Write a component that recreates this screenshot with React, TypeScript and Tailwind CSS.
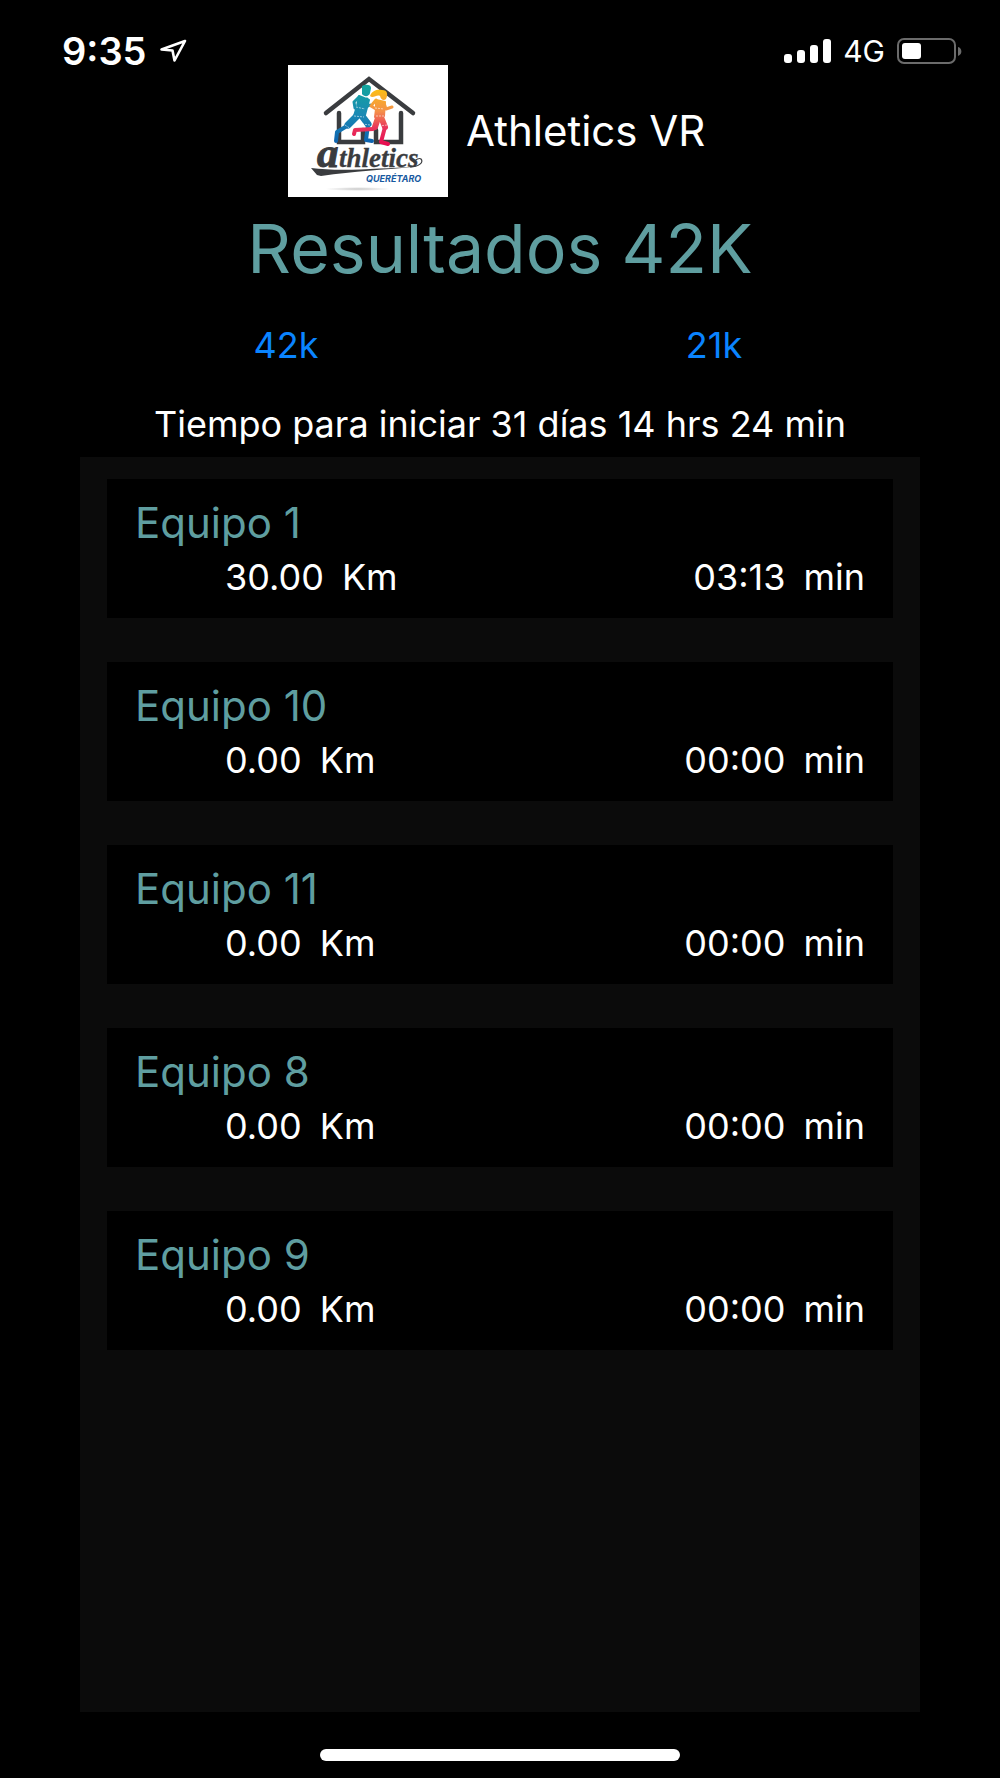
import { clsx } from 'clsx'

const RACES = ['42k', '21k']

const TEAMS = [
  { name: 'Equipo 1', distance: '30.00', time: '03:13' },
  { name: 'Equipo 10', distance: '0.00', time: '00:00' },
  { name: 'Equipo 11', distance: '0.00', time: '00:00' },
  { name: 'Equipo 8', distance: '0.00', time: '00:00' },
  { name: 'Equipo 9', distance: '0.00', time: '00:00' },
]

const BARS = ['h-[9px]', 'h-[13px]', 'h-[18px]', 'h-6']

function StatusBar() {
  return (
    <div className="flex h-[65px] items-center justify-between pt-9 pl-[62px] pr-9">
      <div className="flex items-center gap-3">
        <span className="text-[38px] leading-none font-semibold">9:35</span>
        <svg className="h-6 w-7" viewBox="0 0 28 24" fill="none" stroke="currentColor" strokeWidth="2.6" strokeLinejoin="round">
          <path d="M26 2 2.500 10.500 13.500 11.500 15.500 21.500Z" />
        </svg>
      </div>
      <div className="flex items-center">
        <div className="flex items-end gap-[5px]">
          {BARS.map(h => (
            <span key={h} className={clsx('w-2 rounded-[3px] bg-white', h)} />
          ))}
        </div>
        <span className="ml-3 text-[30px] leading-none">4G</span>
        <svg className="ml-3 h-[26px] w-[67px]" viewBox="0 0 67 26">
          <rect x="1" y="1" width="57" height="24" rx="6" fill="none" stroke="#6b6b6b" strokeWidth="2" />
          <rect x="5" y="5" width="19" height="16" rx="3" fill="#fff" />
          <path d="M61 9c4 1 5 7 0 9Z" fill="#6b6b6b" />
        </svg>
      </div>
    </div>
  )
}

function Logo() {
  return (
    <svg className="h-[132px] w-40 bg-white" viewBox="0 0 160 132" role="img" aria-label="Athletics Querétaro">
      <defs>
        <linearGradient id="blue" gradientUnits="userSpaceOnUse" x1="0" y1="20" x2="0" y2="78">
          <stop offset="0" stopColor="#12a59c" />
          <stop offset="0.5" stopColor="#1a8ab4" />
          <stop offset="1" stopColor="#0c62b0" />
        </linearGradient>
        <linearGradient id="warm" gradientUnits="userSpaceOnUse" x1="0" y1="24" x2="0" y2="80">
          <stop offset="0" stopColor="#fbbf14" />
          <stop offset="0.4" stopColor="#f4904a" />
          <stop offset="0.7" stopColor="#e8325c" />
          <stop offset="1" stopColor="#e80c50" />
        </linearGradient>
        <radialGradient id="shade">
          <stop offset="0" stopColor="#c8c8c8" />
          <stop offset="1" stopColor="#fff" />
        </radialGradient>
      </defs>

      {/* house */}
      <g fill="none" stroke="#3a3c3f" strokeWidth="4.5" strokeLinecap="round">
        <path d="M38 48 81 14l44 34" />
        <path d="M51 48v29h24V65M88 65v12h25V48" />
      </g>

      {/* runners */}
      <g fill="none" stroke="url(#blue)" strokeLinecap="round" strokeLinejoin="round">
        <path d="M74 21c3-2 9-2 9 2l-1 5c-1 4-6 4-8 1Z" fill="url(#blue)" stroke="none" />
        <path d="M71 31 81 35 77 50l-11 1 3-10Z" fill="url(#blue)" strokeWidth="2" />
        <path d="M71 32 66 37 67 43M79 34l-1 8 4-2" strokeWidth="3" />
        <path d="m74 51 6 8" strokeWidth="7" />
        <path d="M80 60 78 75l6 1" strokeWidth="4" />
        <path d="M69 51 60 60" strokeWidth="7" />
        <path d="m59 61-10 6-1 9" strokeWidth="4" />
      </g>
      <g fill="none" stroke="url(#warm)" strokeLinecap="round" strokeLinejoin="round">
        <path d="M82 31c2-6 8-7 12-6 6 0 6 5 4 9-2 2-5 1-6-3-3-2-7 3-10 0Z" fill="url(#warm)" stroke="none" />
        <path d="m88 35 9 2-1 14-9 1 1-8Z" fill="url(#warm)" strokeWidth="2" />
        <path d="m88 35-5 6 5 3M96 38l2 6 6-2" strokeWidth="3" />
        <path d="m93 52 4 10" strokeWidth="6" />
        <path d="m97 62-4 15 7 2" strokeWidth="4" />
        <path d="m90 53-3 9" strokeWidth="6" />
        <path d="m85 64-18 1-1 4" strokeWidth="4" />
      </g>
      <path
        d="m68 42 9 2M66 51l10 1M74 59l8 1M57 60l6 4M87 43l9 1M88 51l8 0M91 61l8-1"
        fill="none"
        stroke="#fff"
        strokeWidth="0.8"
        strokeDasharray="2 1"
        opacity="0.7"
      />

      {/* wordmark */}
      <g fill="#3a3c3f" stroke="#3a3c3f" className="font-['Liberation_Serif',serif] font-bold italic">
        <text x="29" y="102" fontSize="43" strokeWidth="1">a</text>
        <text x="51" y="102" fontSize="27" strokeWidth="0.3">thletics</text>
      </g>
      <path d="M23 103c30 4 72 0 102-1-30 3-58 4-92 9l-4-1Z" fill="#3a3c3f" />
      <path d="M122 102c9 0 14-5 11-8-2-2-5 1-8 3" fill="none" stroke="#3a3c3f" strokeWidth="1.2" />
      <text x="78" y="117" fontSize="9" fill="#17599f" className="font-bold italic">QUERÉTARO</text>
      <ellipse cx="70" cy="124" rx="33" ry="2" fill="url(#shade)" />
    </svg>
  )
}

export default function App() {
  return (
    <div className="flex min-h-screen flex-col bg-black font-['Inter',sans-serif] text-white">
      <StatusBar />

      <header className="flex items-center justify-center gap-[18px]">
        <Logo />
        <span className="min-w-[246px] text-[42px] leading-none">Athletics VR</span>
      </header>

      <main className="flex flex-1 flex-col">
        <h1 className="text-center text-[68px] leading-[102px] text-[#5f9ea0]">Resultados 42K</h1>

        <nav className="grid grid-cols-2 px-[72px]">
          {RACES.map(race => (
            <button key={race} type="button" className="text-[36px] leading-[92px] text-[#0a84ff]">
              {race}
            </button>
          ))}
        </nav>

        <p className="text-center text-[36px] leading-[66px]">Tiempo para iniciar 31 días 14 hrs 24 min</p>

        <ul className="mx-[8%] flex flex-1 flex-col gap-11 bg-[#0b0b0b] px-[27px] py-[22px]">
          {TEAMS.map(team => (
            <li key={team.name} className="bg-black px-7 pt-[17px] pb-3.5">
              <h2 className="text-[42px] leading-[54px] text-[#5f9ea0]">{team.name}</h2>
              <div className="flex justify-between pl-[90px] text-[36px] leading-[54px]">
                <span className="flex gap-[18px]">
                  <span>{team.distance}</span>
                  <span>Km</span>
                </span>
                <span className="flex gap-[18px]">
                  <span>{team.time}</span>
                  <span>min</span>
                </span>
              </div>
            </li>
          ))}
        </ul>
      </main>

      <div className="flex h-[66px] items-end justify-center pb-[17px]">
        <div className="h-3 w-[36%] rounded-full bg-white" />
      </div>
    </div>
  )
}
